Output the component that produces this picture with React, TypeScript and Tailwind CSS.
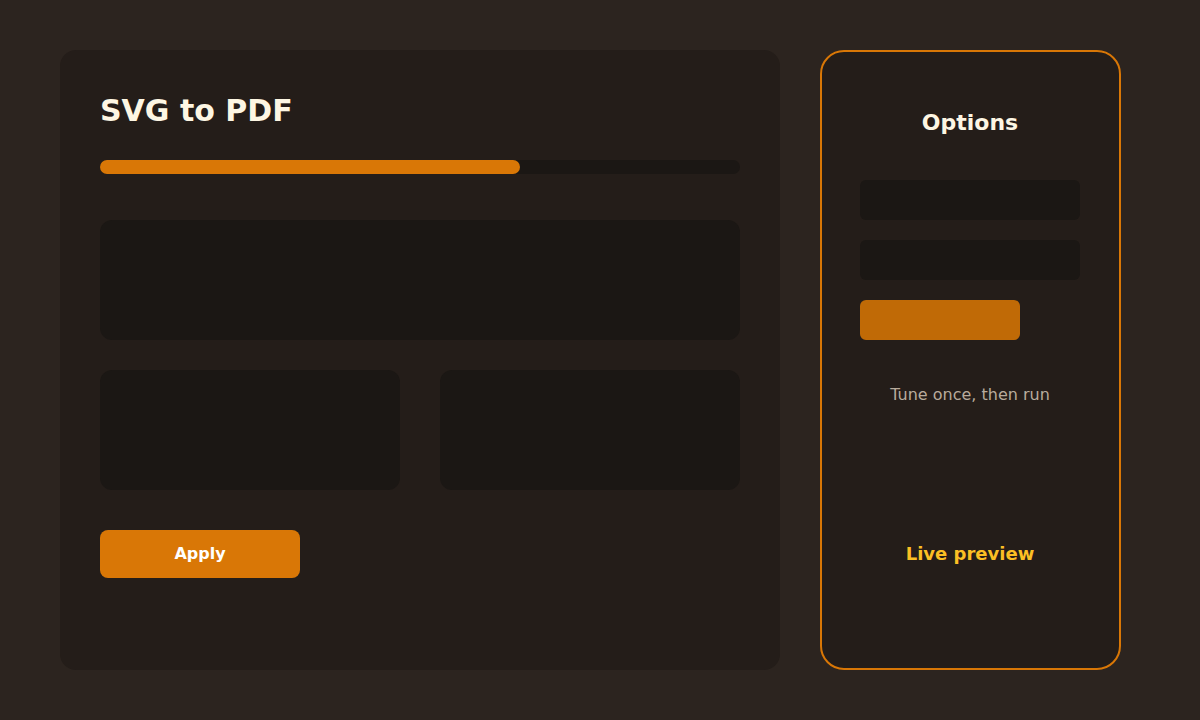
export default function App() {
  return (
    <div
      className="w-[1200px] h-[720px] bg-[#2c241f] flex gap-10 pl-[60px] pt-[50px]"
      style={{ fontFamily: '"DejaVu Sans", "Liberation Sans", sans-serif' }}
    >
      {/* Main panel */}
      <div className="w-[720px] h-[620px] bg-[#241d19] rounded-2xl px-10 pt-[43px] flex flex-col">
        <h1 className="text-[30px] leading-[36px] font-bold text-[#fdf6e3]">SVG to PDF</h1>
        <div className="mt-[31px] h-[14px] w-full rounded-full bg-[#1b1714]">
          <div className="h-full w-[420px] rounded-full bg-[#d97706]" />
        </div>
        <div className="mt-[46px] h-[120px] rounded-xl bg-[#1b1714]" />
        <div className="mt-[30px] grid grid-cols-2 gap-10">
          <div className="h-[120px] rounded-xl bg-[#1b1714]" />
          <div className="h-[120px] rounded-xl bg-[#1b1714]" />
        </div>
        <button className="mt-10 w-[200px] h-12 rounded-lg bg-[#d97706] text-white text-base font-bold">
          Apply
        </button>
      </div>

      {/* Options panel */}
      <div className="w-[301px] h-[620px] rounded-3xl border-2 border-[#d97706] bg-[#241d19] pl-[38px] pr-[39px] pt-[57px] flex flex-col">
        <h2 className="text-[22px] leading-[28px] font-bold text-[#fdf6e3] text-center">Options</h2>
        <div className="mt-[43px] h-10 rounded-md bg-[#1b1714]" />
        <div className="mt-5 h-10 rounded-md bg-[#1b1714]" />
        <div className="mt-5 h-10 w-40 rounded-md bg-[#c06a06]" />
        <p className="mt-[43px] text-base leading-6 text-center text-[#b8ab9c]">Tune once, then run</p>
        <p className="mt-[135px] text-lg leading-6 font-bold text-center text-[#fbbf24]">Live preview</p>
      </div>
    </div>
  );
}
